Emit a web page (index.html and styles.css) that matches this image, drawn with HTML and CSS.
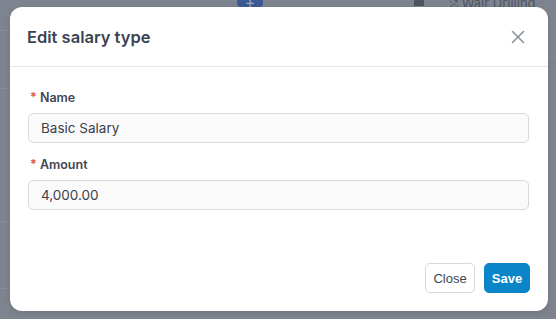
FILE: index.html
```html
<!DOCTYPE html>
<html>
<head>
<meta charset="utf-8">
<link rel="stylesheet" href="styles.css">
</head>
<body>
<div class="backdrop">
  <div class="bg-add">+</div>
  <div class="bg-icon"></div>
  <div class="bg-org"><span class="shuffle">⤮</span> Wair Drilling</div>
  <div class="bg-line l1"></div>
  <div class="bg-line l2"></div>
  <div class="bg-line l3"></div>
  <div class="bg-line l4"></div>
  <div class="bg-line r1"></div>
</div>
<div class="modal">
  <div class="modal-header">
    <h2 class="modal-title">Edit salary type</h2>
    <button class="modal-close" aria-label="Close">
      <svg width="14" height="14" viewBox="0 0 14 14"><path d="M1.5 1.5 L12.5 12.5 M12.5 1.5 L1.5 12.5" stroke="#8a919c" stroke-width="1.6" stroke-linecap="round"/></svg>
    </button>
  </div>
  <div class="modal-body">
    <div class="field">
      <label class="label"><span class="req">*</span> Name</label>
      <div class="input">Basic Salary</div>
    </div>
    <div class="field">
      <label class="label"><span class="req">*</span> Amount</label>
      <div class="input">4,000.00</div>
    </div>
  </div>
  <div class="modal-footer">
    <button class="btn btn-light">Close</button>
    <button class="btn btn-primary">Save</button>
  </div>
</div>
</body>
</html>
```
FILE: styles.css
```css
* { box-sizing: border-box; }
html, body { margin: 0; padding: 0; }
body {
  width: 556px;
  height: 319px;
  overflow: hidden;
  background: #7e848f;
  font-family: Inter, "Noto Sans", sans-serif;
  position: relative;
  padding: 7px 8px 8px 10px;
}
.backdrop { position: absolute; inset: 0; }
.bg-add {
  position: absolute; left: 237px; top: -7px; width: 26px; height: 14px;
  background: #3c5a93; border-radius: 4px; color: #9aa6bc;
  font-size: 16px; line-height: 18px; text-align: center;
}
.bg-icon {
  position: absolute; left: 414px; top: 0; width: 10px; height: 6px;
  background: #4d5360; border-radius: 1px;
}
.bg-org {
  position: absolute; left: 449px; top: -5px; font-size: 13px; line-height: 16px; color: #4e5562;
  white-space: nowrap;
}
.shuffle { font-size: 11px; }
.bg-line { position: absolute; height: 1px; background: #868c96; }
.l1 { left: 0; top: 30px; width: 12px; }
.l2 { left: 0; top: 88px; width: 12px; }
.l3 { left: 0; top: 221px; width: 12px; }
.l4 { left: 0; top: 288px; width: 12px; }
.r1 { left: 548px; top: 56px; width: 8px; }
.modal {
  position: relative;
  width: 538px;
  height: 304px;
  background: #fff;
  border-radius: 12px;
  box-shadow: 0 2px 6px rgba(0,0,0,0.12);
  display: flex;
  flex-direction: column;
}
.modal-header {
  height: 60px;
  border-bottom: 1px solid #e4e5e9;
  display: flex;
  align-items: center;
  justify-content: space-between;
  padding: 0 23px 0 17px;
}
.modal-title {
  margin: 0;
  font-size: 16.5px;
  font-weight: 600;
  color: #3b4353;
  letter-spacing: 0;
}
.modal-close {
  border: 0; background: none; padding: 0; width: 14px; height: 14px;
  display: flex;
}
.modal-body {
  padding: 23px 19px 0 18px;
  display: flex;
  flex-direction: column;
  gap: 14px;
  flex: 1;
}
.field { display: flex; flex-direction: column; gap: 7px; }
.label {
  font-size: 12.5px;
  font-weight: 600;
  color: #3f4654;
  line-height: 16px;
  padding-left: 2px;
}
.req { color: #ef4444; font-weight: 600; }
.input {
  height: 30px;
  border: 1px solid #d8d9df;
  border-radius: 5px;
  background: #fafafa;
  font-size: 13.5px;
  color: #3a3f4a;
  display: flex;
  align-items: center;
  padding-left: 12px;
}
.modal-footer {
  display: flex;
  justify-content: flex-end;
  gap: 9px;
  padding: 0 18px 18px 0;
}
.btn {
  height: 30px;
  border-radius: 5px;
  font-family: "Liberation Sans", Arial, sans-serif;
  font-size: 13px;
  padding: 0;
  text-align: center;
}
.btn-light {
  width: 50px;
  background: #fff;
  border: 1px solid #d6d8de;
  color: #3f4654;
}
.btn-primary {
  width: 46px;
  background: #0a85c8;
  border: 1px solid #0a85c8;
  color: #fff;
  font-weight: 700;
}
```
